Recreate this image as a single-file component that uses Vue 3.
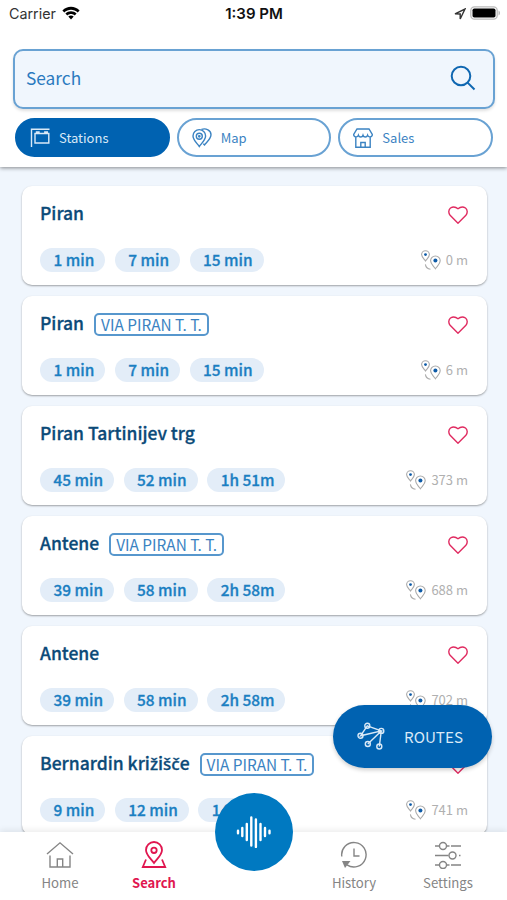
<template>
  <div class="screen">
    <header class="header">
      <div class="status-bar">
        <div class="carrier">
          <span>Carrier</span>
          <svg class="wifi" viewBox="0 0 18 14">
            <path d="M0.4 4.5C5.2-.4 12.800-.4 17.600 4.500L15.700 6.500C12 2.700 6 2.700 2.300 6.500Z" />
            <path d="M3.400 7.600C6.600 4.500 11.400 4.500 14.600 7.600L12.700 9.500C10.600 7.500 7.400 7.500 5.300 9.500Z" />
            <path d="M6.300 10.600C7.900 9.200 10.100 9.200 11.700 10.600L9 13.400Z" />
          </svg>
        </div>
        <span class="clock">1:39 PM</span>
        <div class="status-icons">
          <svg class="location" viewBox="0 0 12 12">
            <path d="M1 5.900L11 1L6.200 11V6Z" />
          </svg>
          <svg class="battery" viewBox="0 0 31 14">
            <rect class="battery-shell" x="0.800" y="0.800" width="26.400" height="12.400" rx="3.600" />
            <rect x="2.500" y="2.500" width="23" height="9" rx="1.800" />
            <path class="battery-tip" d="M28.500 4.500C30.500 5.300 30.500 8.700 28.500 9.500Z" />
          </svg>
        </div>
      </div>

      <div class="search-box">
        <span>Search</span>
        <svg viewBox="0 0 26 26">
          <circle cx="11" cy="11" r="9.300" />
          <path d="M17.600 17.600L24.500 24.500" />
        </svg>
      </div>

      <div class="tabs">
        <button
          v-for="tab in tabs"
          :key="tab.name"
          class="tab"
          :class="{ active: tab.name === activeTab }"
          @click="activeTab = tab.name"
        >
          <svg v-if="tab.name === 'Stations'" viewBox="0 0 20 20">
            <path d="M1.500 19V1.300H19.500M5 5.500H18.800V15H5ZM6.500 5.500V4H9V5.500M14.800 5.500V4H17.300V5.500" />
          </svg>
          <svg v-else-if="tab.name === 'Map'" viewBox="0 0 20 20">
            <path d="M7.300 18.500C4.500 14.800 1 11.500 1 7.900A6.300 6.300 0 0 1 13.600 7.900C13.600 11.500 10.100 14.800 7.300 18.500Z" />
            <circle cx="7.300" cy="8.300" r="3" />
            <circle cx="7.300" cy="8.300" r="0.700" />
            <path d="M9.500 1.400C14-.3 19 2.500 19 6.800C19 10.500 15.500 13.500 12.500 17L11.300 15.800" />
          </svg>
          <svg v-else viewBox="0 0 20 20">
            <path d="M4 1H16L19.300 6.500C19.300 9.300 15.500 9.700 14.600 7.200C13.800 9.500 10.800 9.500 10 7.200C9.200 9.500 6.200 9.500 5.400 7.200C4.500 9.700 .7 9.300 .7 6.500ZM2.800 9V19.200H17.200V9M7.800 19V14.500H12.200V19" />
          </svg>
          <span>{{ tab.name }}</span>
        </button>
      </div>
    </header>

    <main class="station-list">
      <div v-for="(station, index) in stations" :key="index" class="card">
        <div class="card-top">
          <h3><span v-for="(part, i) in splitAccents(station.name)" :key="i" :class="{ accent: i % 2 }">{{ part }}</span></h3>
          <span v-if="station.via" class="via">{{ station.via }}</span>
          <svg class="heart" viewBox="0 0 20 18">
            <path d="M10 17.200L2.100 9.200C.2 7.100 .4 3.800 2.500 2C4.900 .4 7.700 .8 10 2.700C12.300 .8 15.100 .4 17.500 2C19.600 3.800 19.800 7.100 17.900 9.200Z" />
          </svg>
        </div>
        <div class="card-bottom">
          <span v-for="time in station.times" :key="time" class="time">{{ time }}</span>
          <div class="distance">
            <svg viewBox="0 0 20 20">
              <path d="M4.500 11C3 8.800.6 7.100.6 4.600A3.900 3.900 0 0 1 8.400 4.600C8.400 7.100 6 8.800 4.500 11Z" />
              <path d="M14.400 18.800C12.600 16 9.600 14.200 9.600 10.800A4.800 4.800 0 0 1 19.200 10.800C19.200 14.200 16.200 16 14.400 18.800Z" />
              <path d="M4.400 14.300C4.800 17.200 6.500 18.800 9.500 19.300" />
              <circle cx="4.500" cy="4.600" r="1.400" />
              <circle cx="14.400" cy="10.600" r="2" />
            </svg>
            <span>{{ station.distance }}</span>
          </div>
        </div>
      </div>
    </main>

    <button class="routes">
      <svg viewBox="0 0 28 28">
        <path d="M10.300 3.800L24.300 8.900L3.500 13.800ZM24.300 8.900L10.800 22M24.300 8.900L22.300 24.500" />
        <circle cx="10.300" cy="3.800" r="2.500" />
        <circle cx="24.300" cy="8.900" r="2.500" />
        <circle cx="3.500" cy="13.800" r="2.500" />
        <circle cx="10.800" cy="22" r="2.500" />
        <circle cx="22.300" cy="24.500" r="2.500" />
      </svg>
      <span>ROUTES</span>
    </button>

    <nav class="bottom-nav">
      <a class="nav-item">
        <svg viewBox="0 0 28 28">
          <path d="M1 13L14 1.800L27 13M4 14.500V26H24V14.500M11.300 26V18H16.700V26" />
        </svg>
        <span>Home</span>
      </a>
      <a class="nav-item active">
        <svg viewBox="0 0 28 28">
          <path d="M14 22C10.500 17.300 6 14 6 9A8 8 0 0 1 22 9C22 14 17.500 17.300 14 22Z" />
          <circle cx="14" cy="9.300" r="2.700" />
          <path d="M6 18.500L2.800 26H25.200L22 18.500" />
        </svg>
        <span>Search</span>
      </a>
      <div class="nav-gap"></div>
      <a class="nav-item">
        <svg viewBox="0 0 28 28">
          <path d="M1.800 15.500A12.200 12.200 0 1 1 7 23.800M14 7.500V15H19.500" />
          <path class="solid" d="M2 20H10.500L5 27Z" />
        </svg>
        <span>History</span>
      </a>
      <a class="nav-item">
        <svg viewBox="0 0 28 28">
          <path d="M1 5H5.500M12.500 5H15.500M17 5H27M1 14.500H14.500M25 14.500H26.500M1 24H5.500M12.500 24H15.500M17 24H27" />
          <circle cx="9" cy="5" r="3.500" />
          <circle cx="18.500" cy="14.500" r="3.500" />
          <circle cx="9" cy="24" r="3.500" />
        </svg>
        <span>Settings</span>
      </a>
    </nav>

    <button class="voice">
      <svg viewBox="0 0 36 32">
        <path d="M2 14.800V17.200M6.300 12V20M10.800 8V24M15.300 1.500V29.500M19.900 3.500V31M24.500 8V24M29 12V20M33.500 14.800V17.200" />
      </svg>
    </button>
  </div>
</template>

<script setup>
import { ref } from 'vue';

const tabs = [{ name: 'Stations' }, { name: 'Map' }, { name: 'Sales' }];
const activeTab = ref('Stations');

const stations = [
  { name: 'Piran', times: ['1 min', '7 min', '15 min'], distance: '0 m' },
  { name: 'Piran', via: 'VIA PIRAN T. T.', times: ['1 min', '7 min', '15 min'], distance: '6 m' },
  { name: 'Piran Tartinijev trg', times: ['45 min', '52 min', '1h 51m'], distance: '373 m' },
  { name: 'Antene', via: 'VIA PIRAN T. T.', times: ['39 min', '58 min', '2h 58m'], distance: '688 m' },
  { name: 'Antene', times: ['39 min', '58 min', '2h 58m'], distance: '702 m' },
  { name: 'Bernardin križišče', via: 'VIA PIRAN T. T.', times: ['9 min', '12 min', '14 min'], distance: '741 m' },
];

// the main font has no carons, odd parts are set in another one
const splitAccents = (name) => name.split(/([čšž]+)/);
</script>

<style>
body {
  margin: 0;
}
</style>

<style scoped>
.screen {
  position: relative;
  display: flex;
  flex-direction: column;
  width: 507px;
  height: 900px;
  overflow: hidden;
  background: #f0f6fd;
  font-family: "Noto Sans CJK SC", "Open Sans", sans-serif;
}

.screen * {
  box-sizing: border-box;
}

svg {
  display: block;
  flex-shrink: 0;
  fill: none;
  stroke: currentColor;
  stroke-width: 1.4;
}

button {
  border: none;
  font-family: inherit;
  cursor: pointer;
}

.header {
  position: relative;
  z-index: 1;
  flex: 0 0 167px;
  background: #fff;
  box-shadow: 0 1px 4px rgba(0, 0, 0, 0.45);
}

.status-bar {
  display: grid;
  grid-template-columns: 1fr auto 1fr;
  align-items: center;
  height: 27px;
  padding: 0 8px 0 9px;
  font-family: Inter, sans-serif;
  font-size: 14.3px;
  color: #333;
}

.carrier,
.status-icons {
  display: flex;
  align-items: center;
}

.carrier {
  gap: 6px;
}

.wifi {
  width: 18px;
  height: 14px;
  margin-top: -1px;
  fill: #000;
  stroke: none;
}

.clock {
  font-size: 15px;
  font-weight: 600;
  color: #111;
}

.status-icons {
  justify-content: flex-end;
  gap: 4px;
}

.location {
  width: 12px;
  height: 12px;
}

.battery {
  width: 31px;
  height: 14px;
  margin-right: -2px;
  margin-top: -1px;
  fill: #000;
  stroke: none;
}

.battery-shell {
  fill: #fff;
  stroke: #bbb;
  stroke-width: 1.3;
}

.battery-tip {
  fill: #bbb;
}

.search-box {
  display: flex;
  align-items: center;
  justify-content: space-between;
  height: 60px;
  margin: 22px 12px 0 13px;
  padding: 0 17px 2px 11px;
  border: 2px solid #69a2d3;
  border-radius: 10px;
  background: #f0f6fd;
  box-shadow: 0 2px 3px rgba(0, 0, 0, 0.12);
  font-size: 17.3px;
  line-height: 24px;
  color: #2b7abf;
}

.search-box svg {
  width: 26px;
  height: 26px;
  stroke: #0f67b1;
  stroke-width: 2;
}

.tabs {
  display: grid;
  grid-template-columns: repeat(3, 1fr);
  gap: 7px;
  padding: 9px 14px 0 15px;
}

.tab {
  display: flex;
  align-items: center;
  gap: 9px;
  height: 39px;
  padding: 0 13px;
  border: 2px solid #69a2d3;
  border-radius: 20px;
  background: #fff;
  font-size: 13px;
  color: #3b83c2;
}

.tab svg {
  width: 20px;
  height: 20px;
}

.tab.active {
  border-color: #0062b1;
  background: #0062b1;
  color: #d9e9f7;
}

.station-list {
  display: flex;
  flex-direction: column;
  gap: 11px;
  padding: 19px 20px 0 22px;
}

.card {
  flex-shrink: 0;
  height: 99px;
  padding: 16px 19px 0 18px;
  border-radius: 10px;
  background: #fff;
  box-shadow: 0 1px 2px rgba(0, 0, 0, 0.35);
}

.card-top {
  display: flex;
  align-items: center;
  height: 24px;
}

.card-top h3 {
  margin: 0;
  font-size: 17.5px;
  line-height: 22px;
  height: 24px;
  font-weight: 500;
  -webkit-text-stroke: 0.3px currentColor;
  color: #0b4a78;
}

.accent {
  font-family: "Noto Sans", sans-serif;
  font-size: 17px;
}

.via {
  height: 23px;
  margin-left: 10px;
  padding: 0 5px;
  border: 2px solid #5797cd;
  border-radius: 5px;
  font-size: 15.4px;
  line-height: 18px;
  color: #3b83c2;
}

.heart {
  width: 20px;
  height: 18px;
  margin-top: 1px;
  margin-left: auto;
  color: #e02a60;
}

.card-bottom {
  display: flex;
  align-items: center;
  gap: 9.5px;
  height: 24px;
  margin-top: 22px;
}

.time {
  height: 24px;
  padding: 0 11px 0 13.500px;
  border-radius: 12px;
  background: #e3edf8;
  font-size: 15.4px;
  line-height: 23px;
  font-weight: 500;
  -webkit-text-stroke: 0.3px currentColor;
  color: #1b7fc2;
}

.distance {
  display: flex;
  align-items: center;
  gap: 5px;
  margin-left: auto;
  font-size: 13px;
  line-height: 24px;
  color: #b0b0b0;
}

.distance svg {
  width: 20px;
  height: 20px;
  stroke: #aaa;
  stroke-width: 1.1;
}

.distance circle {
  fill: #0d5ba8;
  stroke: none;
}

.routes {
  position: absolute;
  z-index: 2;
  right: 15px;
  bottom: 132px;
  display: flex;
  align-items: center;
  gap: 19px;
  width: 159px;
  height: 63px;
  padding: 0 24px 2px;
  border-radius: 32px;
  background: #0062b1;
  box-shadow: 0 2px 4px rgba(0, 0, 0, 0.2);
  font-size: 15.2px;
  line-height: 24px;
  color: #d9e9f7;
}

.routes svg {
  width: 28px;
  height: 28px;
}

.bottom-nav {
  position: absolute;
  z-index: 2;
  left: 0;
  right: 0;
  bottom: 0;
  display: grid;
  grid-template-columns: 94px 94px 1fr 94px 94px;
  height: 68px;
  padding: 0 12px 0 13px;
  background: #fff;
  box-shadow: 0 -2px 6px rgba(0, 0, 0, 0.08);
}

.nav-item {
  display: flex;
  flex-direction: column;
  align-items: center;
  padding-top: 9px;
  font-size: 13.2px;
  line-height: 20px;
  color: #858585;
}

.nav-item svg {
  width: 28px;
  height: 28px;
  margin-bottom: 4px;
}

.nav-item .solid {
  fill: currentColor;
  stroke: none;
}

.nav-item.active {
  font-size: 13px;
  font-weight: 700;
  color: #e0164f;
}

.nav-item.active svg {
  stroke-width: 1.8;
}

.voice {
  position: absolute;
  z-index: 3;
  left: 215px;
  bottom: 29px;
  display: flex;
  align-items: center;
  justify-content: center;
  width: 78px;
  height: 78px;
  padding: 0;
  border-radius: 50%;
  background: #0079c1;
  color: #fff;
}

.voice svg {
  width: 36px;
  height: 32px;
  stroke-width: 2.4;
  stroke-linecap: round;
}
</style>
